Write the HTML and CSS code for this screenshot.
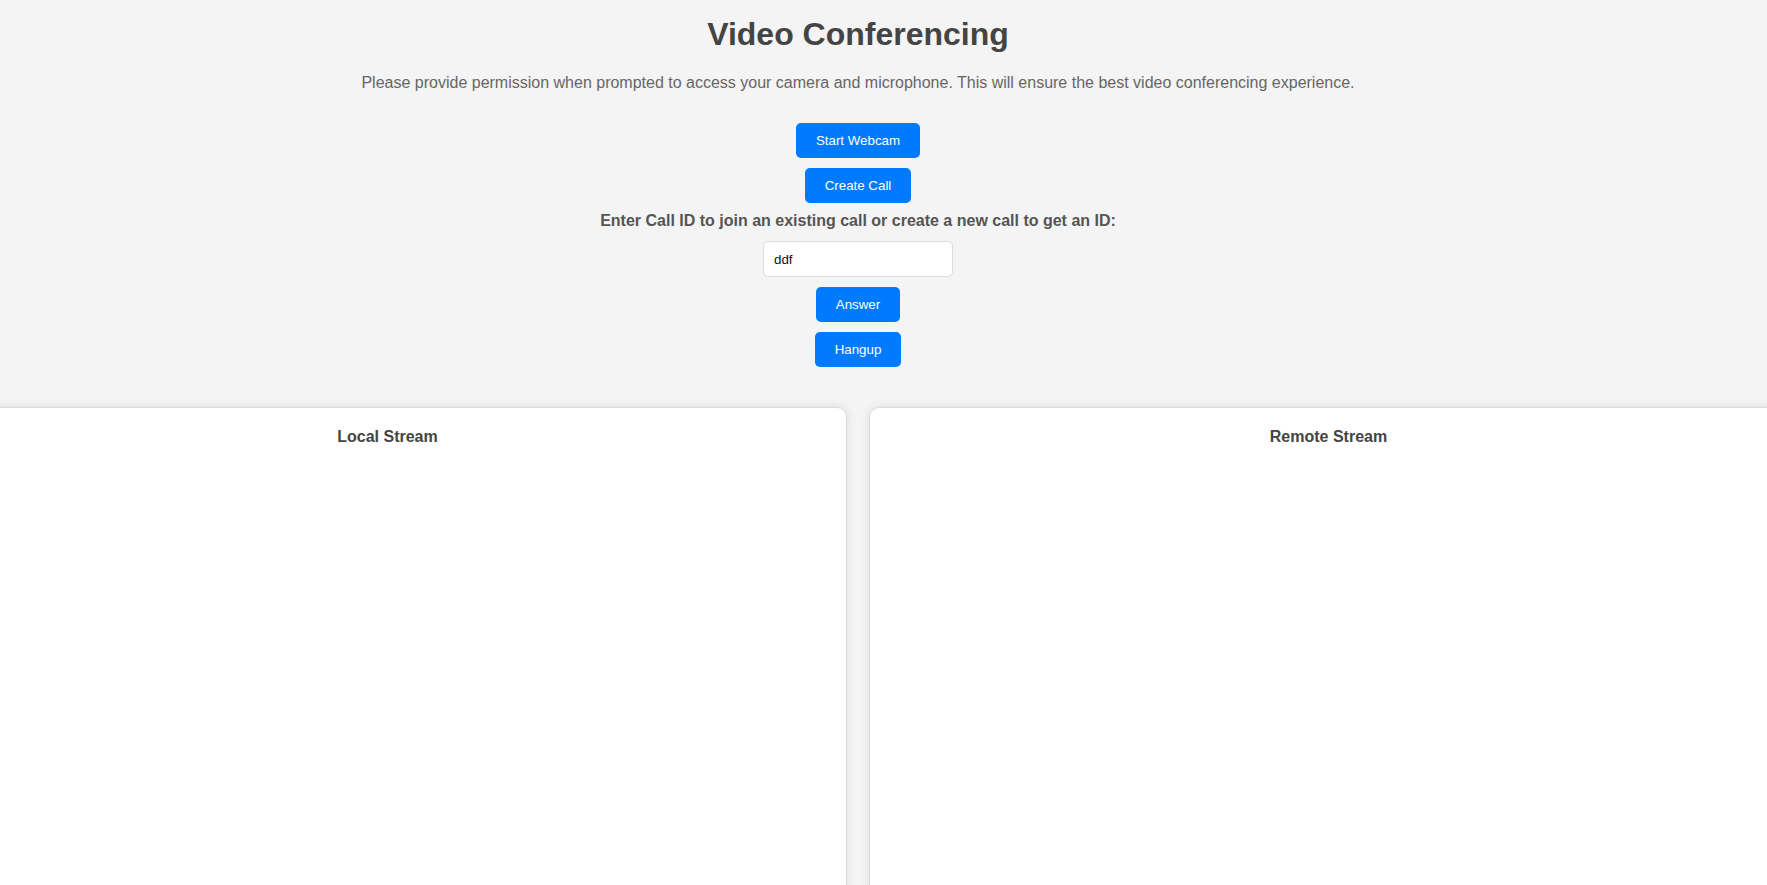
FILE: index.html
```html
<!DOCTYPE html>
<html lang="en">
<head>
<meta charset="utf-8">
<title>Video Conferencing</title>
<link rel="stylesheet" href="styles.css">
</head>
<body>
<div class="page">
  <h1 class="title">Video Conferencing</h1>
  <p class="intro">Please provide permission when prompted to access your camera and microphone. This will ensure the best video conferencing experience.</p>
  <div class="controls">
    <button class="btn">Start Webcam</button>
    <button class="btn">Create Call</button>
    <label class="call-label" for="callInput">Enter Call ID to join an existing call or create a new call to get an ID:</label>
    <input id="callInput" class="call-input" type="text" value="ddf">
    <button class="btn">Answer</button>
    <button class="btn">Hangup</button>
  </div>
  <div class="videos">
    <div class="video-card">
      <h3 class="video-title">Local Stream</h3>
      <div class="video-area"></div>
    </div>
    <div class="video-card">
      <h3 class="video-title">Remote Stream</h3>
      <div class="video-area"></div>
    </div>
  </div>
</div>
</body>
</html>
```

FILE: styles.css
```css
html, body {
  margin: 0;
  padding: 0;
  overflow: hidden;
  background: #f4f4f4;
}

body {
  font-family: "Liberation Sans", Arial, sans-serif;
  color: #444;
}

.page {
  width: 1716px;
  display: flex;
  flex-direction: column;
  align-items: center;
  text-align: center;
}

.title {
  font-size: 32px;
  font-weight: bold;
  color: #444;
  margin: 16px 0 21px;
}

.intro {
  font-size: 16px;
  color: #666;
  margin: 0 0 31px;
}

.controls {
  display: flex;
  flex-direction: column;
  align-items: center;
  gap: 10px;
}

.btn {
  font-family: "Liberation Sans", Arial, sans-serif;
  font-size: 13.333px;
  color: #fff;
  background: #007bff;
  border: none;
  border-radius: 5px;
  padding: 10px 20px;
  cursor: pointer;
}

.call-label {
  font-size: 16px;
  font-weight: bold;
  color: #555;
  line-height: 16px;
  margin-bottom: 2px;
}

.call-input {
  box-sizing: border-box;
  width: 190px;
  font-family: "Liberation Sans", Arial, sans-serif;
  font-size: 13.333px;
  color: #111;
  padding: 9.5px 10px;
  border: 1px solid #ddd;
  border-radius: 5px;
  background: #fff;
}

.videos {
  display: flex;
  gap: 22px;
  margin-top: 40px;
}

.video-card {
  flex: 0 0 919px;
  box-sizing: border-box;
  height: 600px;
  background: #fff;
  border: 1px solid #ddd;
  border-radius: 10px;
  box-shadow: 0 0 10px rgba(0, 0, 0, 0.1);
  padding: 20px;
}

.video-title {
  font-size: 16px;
  font-weight: bold;
  color: #444;
  margin: 0 0 20px;
}

.video-area {
  width: 100%;
  height: 500px;
}
```
